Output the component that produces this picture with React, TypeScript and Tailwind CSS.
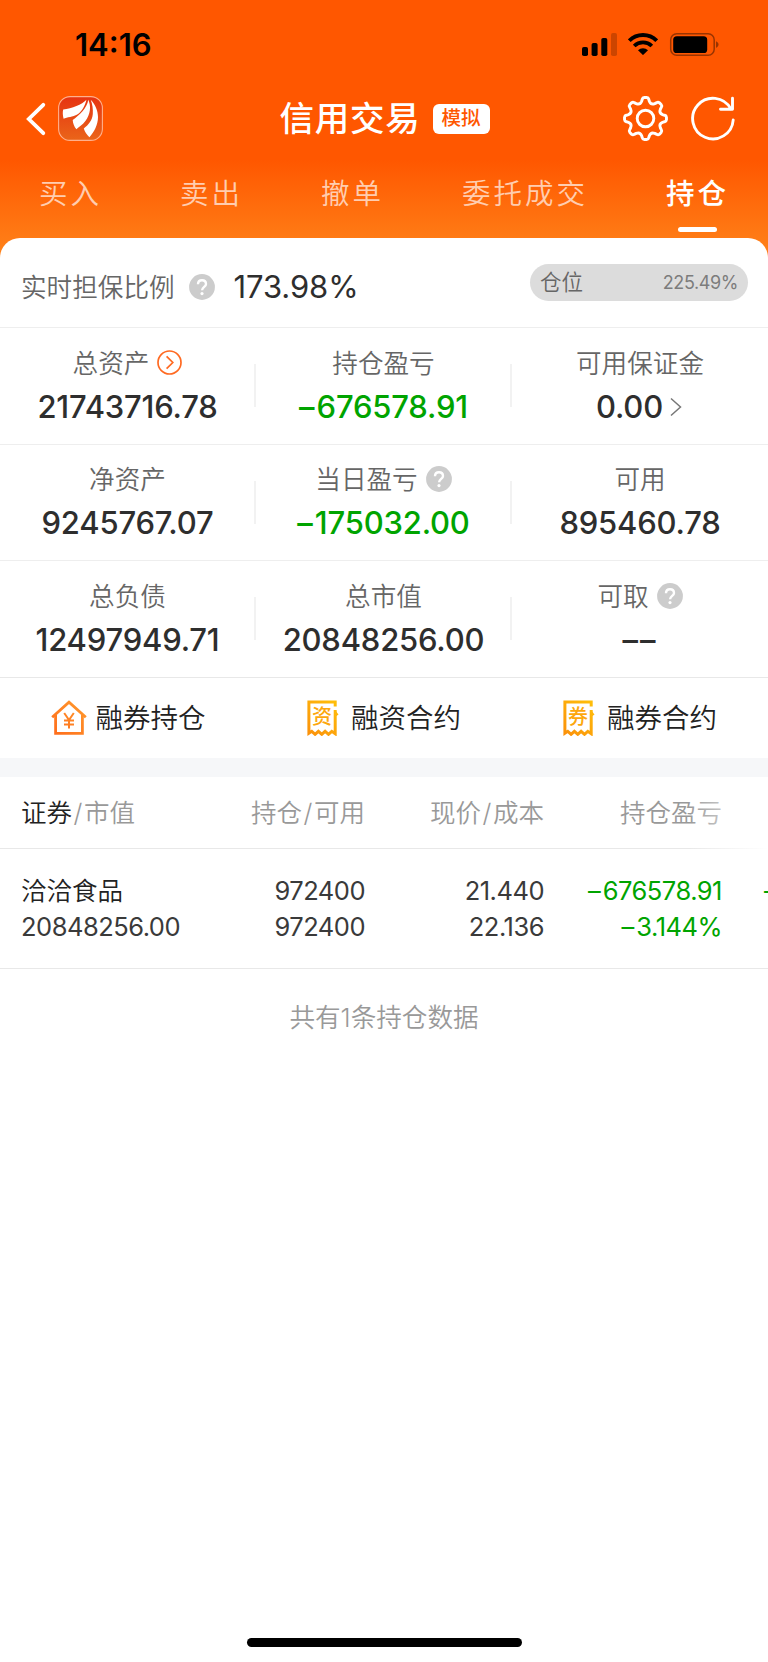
import React from 'react';
import clsx from 'clsx';

const tabs = ['买入', '卖出', '撤单', '委托成交', '持仓'];

const assets = [
  [
    { label: '总资产', value: '21743716.78', icon: 'arrow' },
    { label: '持仓盈亏', value: '–676578.91', green: true },
    { label: '可用保证金', value: '0.00', more: true },
  ],
  [
    { label: '净资产', value: '9245767.07' },
    { label: '当日盈亏', value: '–175032.00', green: true, icon: 'help' },
    { label: '可用', value: '895460.78' },
  ],
  [
    { label: '总负债', value: '12497949.71' },
    { label: '总市值', value: '20848256.00' },
    { label: '可取', value: '––', icon: 'help' },
  ],
];

// Eight rounded teeth around (22.5, 22.5)
function gearPath() {
  const p = (deg: number, r: number) => {
    const a = ((deg - 90) * Math.PI) / 180;
    return `${(22.5 + r * Math.cos(a)).toFixed(2)} ${(22.5 + r * Math.sin(a)).toFixed(2)}`;
  };
  let d = `M${p(-13, 17.5)}`;
  for (let i = 0; i < 8; i++) {
    const a = i * 45;
    d += `L${p(a - 9.5, 19.5)}Q${p(a - 8, 21)} ${p(a - 3, 21)}L${p(a + 3, 21)}Q${p(a + 8, 21)} ${p(a + 9.5, 19.5)}`;
    d += `L${p(a + 13, 17.5)}Q${p(a + 22.5, 14.4)} ${p(a + 32, 17.5)}`;
  }
  return d + 'Z';
}

// The en dash is drawn wider apart than the digits
function Amount({ value }: { value: string }) {
  const digits = value.replace(/–/g, '');
  const dashes = value.slice(0, value.length - digits.length);
  return (
    <span className="whitespace-nowrap">
      {dashes && <span className="tracking-[2px]">{dashes}</span>}
      {digits}
    </span>
  );
}

function HelpIcon() {
  return (
    <svg className="h-[26px] w-[26px] shrink-0" viewBox="0 0 26 26" fill="none">
      <circle cx="13" cy="13" r="12.9" fill="#cccccc" />
      <path d="M9 10.2C9 7.6 10.7 6.2 13 6.2s4 1.5 4 3.7c0 2.8-3.9 3.1-3.9 6.4" stroke="#fff" strokeWidth="2.4" />
      <circle cx="13" cy="19.6" r="1.6" fill="#fff" />
    </svg>
  );
}

function ArrowIcon() {
  return (
    <svg className="h-[25px] w-[25px] shrink-0" viewBox="0 0 25 25" fill="none" stroke="#ff6a22" strokeWidth="1.7">
      <circle cx="12.5" cy="12.5" r="11.5" />
      <path d="M9.6 6.3l6.2 6.2-6.2 6.2" />
    </svg>
  );
}

function HouseIcon() {
  return (
    <svg className="h-[35px] w-[36px]" viewBox="0 0 36 35" fill="none" stroke="url(#house)" strokeWidth="2.8">
      <defs>
        <linearGradient id="house" x1="0" y1="35" x2="36" y2="0" gradientUnits="userSpaceOnUse">
          <stop stopColor="#ff6a1a" />
          <stop offset="1" stopColor="#ff9d2e" />
        </linearGradient>
      </defs>
      <path d="M1.2 17.2L18 2.2l16.8 15" />
      <path d="M4.6 15v18.4h26.8V15" />
      <path d="M13.2 13l4.8 7 4.8-7M18 20v8.5M13 20.5h10M13 24.5h10" strokeWidth="2" />
    </svg>
  );
}

function BillIcon({ char }: { char: string }) {
  return (
    <div className="relative h-[36px] w-[32px]">
      <svg className="h-[36px] w-[32px]" viewBox="0 0 32 36" fill="none" stroke="url(#bill)" strokeWidth="3">
        <defs>
          <linearGradient id="bill" x1="0" y1="36" x2="32" y2="0" gradientUnits="userSpaceOnUse">
            <stop stopColor="#fb8f0a" />
            <stop offset="1" stopColor="#ffc20a" />
          </linearGradient>
        </defs>
        <path d="M28.2 6.5V1.9H1.9v31.3l2.9-1.9 3.3 3 3.3-3 3.4 3 3.3-3 3.4 3 3.3-3 3.4 2.4V10" />
        <path d="M28 10l3.5 4.5-3.5 2.5z" fill="#ffb60a" stroke="none" />
      </svg>
      <span className="absolute left-[5px] top-[7px] text-[20px] leading-[20px] font-medium text-[#fda70c]">{char}</span>
    </div>
  );
}

function StatusBar() {
  return (
    <div className="flex h-[88px] items-center justify-between pl-[75px] pr-[49px]">
      <span className="text-[31px] leading-none font-semibold text-black">14:16</span>
      <div className="flex items-center">
        <svg className="h-[23px] w-[35px]" viewBox="0 0 35 23">
          <rect x="0" y="14" width="6" height="9" rx="1.8" />
          <rect x="9.6" y="10" width="6" height="13" rx="1.8" />
          <rect x="19.3" y="5" width="6" height="18" rx="1.8" />
          <rect x="29" y="0" width="6" height="23" rx="1.8" opacity=".2" />
        </svg>
        <svg className="ml-[11.5px] h-[22px] w-[30px]" viewBox="0 0 30 22" fill="none" stroke="#000">
          <path d="M1.3 7.7a19.5 19.5 0 0 1 27.4 0" strokeWidth="4" />
          <path d="M6.2 13a12.6 12.6 0 0 1 17.6 0" strokeWidth="3.8" />
          <path d="M10 17.2a7.2 7.2 0 0 1 10 0l-5 4.9z" fill="#000" stroke="none" />
        </svg>
        <svg className="ml-[11px] h-[23px] w-[50px]" viewBox="0 0 50 23" fill="none">
          <rect x="1.7" y=".8" width="43.5" height="21.4" rx="6" stroke="#000" strokeOpacity=".4" strokeWidth="1.5" />
          <rect x="4.2" y="3.2" width="34" height="16.8" rx="3.6" fill="#000" />
          <path d="M47 8.2c1.8.8 2.5 1.9 2.5 3.3s-.7 2.5-2.5 3.3z" fill="#000" fillOpacity=".4" />
        </svg>
      </div>
    </div>
  );
}

function TitleBar() {
  return (
    <div className="flex h-[61px] items-center justify-between pl-[26px] pr-[33px]">
      <div className="flex w-[152px] items-center gap-[12px]">
        <svg className="h-[34px] w-[20px]" viewBox="0 0 20 34" fill="none" stroke="#fff" strokeWidth="3.8" strokeLinecap="round">
          <path d="M17.3 2.8L2.8 17l14.5 14.2" />
        </svg>
        <svg className="h-[45px] w-[45px]" viewBox="0 0 45 45">
          <defs>
            <linearGradient id="logo" x1="0" y1="0" x2="0" y2="1">
              <stop stopColor="#e63312" />
              <stop offset="1" stopColor="#ea6519" />
            </linearGradient>
          </defs>
          <rect x=".6" y=".6" width="43.8" height="43.8" rx="11.5" fill="url(#logo)" stroke="#ffb08c" strokeWidth="1.1" />
          <g fill="#fff">
            <path d="M28.4 3.7C24 8.8 14 12.3 5.2 13.4c-.7 2.5-.5 6 .4 9.4 3.4-1.7 9.5-1.8 13.6-4.3C24.5 15 27.3 9 28.4 3.7z" />
            <path d="M30.2 3.7C29.5 11.5 21 19.5 14.7 24c.2 3.4 1.4 6.5 3.7 9.3 2.4-2.5 6-4.3 9-8.3 5-6.8 6-15 2.8-21.3z" />
            <path d="M32.7 3.7c4.5 4.3 7.3 11 7.3 17.3 0 8-4 15-8.6 20.3-2.5-2.5-4.6-5.3-5.6-8.8 4.5-3.6 8.600-8 9-14.500.3-5-.3-9.900-2.100-14.300z" />
          </g>
        </svg>
      </div>
      <div className="ml-[16px] flex items-center gap-[12px]">
        <h1 className="pt-px text-[34.5px] leading-[50px] font-medium tracking-[0.8px] text-white">信用交易</h1>
        <span className="flex h-[30px] w-[57px] items-center justify-center rounded-[6px] bg-white pt-px text-[19.5px] font-medium text-[#ff5700]">
          模拟
        </span>
      </div>
      <div className="flex w-[160px] items-center justify-end gap-[23px]">
        <svg className="h-[45px] w-[45px]" viewBox="0 0 45 45" fill="none" stroke="#fff" strokeWidth="2.9" strokeLinejoin="round">
          <path d={gearPath()} />
          <circle cx="22.5" cy="22.5" r="8.3" />
        </svg>
        <svg className="h-[45px] w-[44px]" viewBox="0 0 44 45" fill="none" stroke="#fff" strokeWidth="2.9" strokeLinecap="round">
          <path d="M42.2 24a20.3 20.3 0 1 1-2.5-11.3" />
          <path d="M41.5 2.3v10.900H29.500" strokeLinejoin="round" />
        </svg>
      </div>
    </div>
  );
}

function Tabs() {
  return (
    <div className="flex h-[89px] justify-between pl-[39px] pr-[39px] pt-[24px]">
      {tabs.map((tab, i) => {
        const active = i === tabs.length - 1;
        return (
          <div key={tab} className="flex flex-col items-center">
            <span
              className={clsx(
                'text-[28.5px] leading-[42px] tracking-[3px]',
                active ? 'font-medium text-white' : 'font-[350] text-[#ffcdb0]'
              )}
            >
              {tab}
            </span>
            {active && <div className="mt-[12px] h-[5px] w-[39px] rounded-full bg-white" />}
          </div>
        );
      })}
    </div>
  );
}

function AssetGrid() {
  return (
    <div>
      {assets.map((row, i) => (
        <div key={i} className="grid h-[116.5px] grid-cols-3 border-t-[1.5px] border-[#eeeeee]">
          {row.map((cell, j) => (
            <div key={cell.label} className="flex">
              <div className="flex flex-1 flex-col items-center pt-[16px]">
                <div className="flex h-[40px] items-center gap-[8px] text-[25.6px] font-[350] text-[#666]">
                  {cell.label}
                  {cell.icon && <div className="mb-[3px]">{cell.icon === 'help' ? <HelpIcon /> : <ArrowIcon />}</div>}
                </div>
                <div
                  className={clsx(
                    'flex h-[46px] items-center text-[31px] font-medium tracking-[-0.2px]',
                    cell.green ? 'text-[#00a400]' : 'text-[#2e2e2e]'
                  )}
                >
                  <Amount value={cell.value} />
                  {cell.more && (
                    <svg className="ml-[7px] mr-[2px] h-[20px] w-[12px]" viewBox="0 0 12 20" fill="none" stroke="#777" strokeWidth="1.5">
                      <path d="M1 1.5l9.5 8.5L1 18.5" />
                    </svg>
                  )}
                </div>
              </div>
              {j < 2 && <div className="-ml-px mt-[36px] h-[43px] w-[2px] bg-[#f2f2f2]" />}
            </div>
          ))}
        </div>
      ))}
    </div>
  );
}

function Actions() {
  return (
    <div className="grid h-[81px] grid-cols-3 border-t border-[#e8e8e8] text-[27.5px] font-[350] text-[#222]">
      <div className="flex items-center justify-center gap-[9px]">
        <HouseIcon />
        <span className="pt-[2px]">融券持仓</span>
      </div>
      <div className="flex items-center justify-center gap-[12px]">
        <BillIcon char="资" />
        <span className="pt-[2px]">融资合约</span>
      </div>
      <div className="flex items-center justify-center gap-[12px]">
        <BillIcon char="券" />
        <span className="pt-[2px]">融券合约</span>
      </div>
    </div>
  );
}

function Slash() {
  return <span className="mx-[1.5px]">/</span>;
}

function Positions() {
  return (
    <div className="overflow-hidden">
      <div className="relative grid h-[72px] grid-cols-[170px_174px_179px_178px] items-center border-b border-[#e8e8e8] pl-[21px] pt-[2px] text-right text-[25.5px] font-[350] text-[#999]">
        <div className="text-left">
          <span className="text-[#222]">证券</span>
          <Slash />
          市值
        </div>
        <div>
          持仓
          <Slash />
          可用
        </div>
        <div>
          现价
          <Slash />
          成本
        </div>
        <div>持仓盈亏</div>
        <div className="absolute -bottom-px right-0 top-0 w-[80px] bg-gradient-to-r from-transparent to-white" />
      </div>
      <div className="grid h-[120px] grid-cols-[170px_174px_179px_178px_46px] border-b border-[#e8e8e8] pl-[21px] pt-[24px] text-right text-[25.5px] leading-[36px] tracking-[-0.5px] text-[#3a3a3a]">
        <div className="text-left">
          <div className="font-[350] tracking-normal text-[#222]">洽洽食品</div>
          <div>20848256.00</div>
        </div>
        <div>
          <div>972400</div>
          <div>972400</div>
        </div>
        <div>
          <div>21.440</div>
          <div>22.136</div>
        </div>
        <div className="text-[#00a400]">
          <div>
            <Amount value="–676578.91" />
          </div>
          <div>
            <Amount value="–3.144%" />
          </div>
        </div>
        <div className="overflow-hidden pl-[42px] text-left text-[#00a400]">–</div>
      </div>
      <div className="pt-[29px] text-center text-[25.6px] leading-[40px] font-[350] text-[#999]">共有1条持仓数据</div>
    </div>
  );
}

function App() {
  return (
    <div className="flex h-[1662px] w-[768px] flex-col overflow-hidden bg-white font-['Inter','Noto_Sans_CJK_SC',sans-serif]">
      <div className="bg-[linear-gradient(to_bottom,#ff5700_0px,#ff5700_160px,#ff8018_250px)]">
        <StatusBar />
        <TitleBar />
        <Tabs />
        <div className="flex h-[89px] justify-between rounded-t-[20px] bg-white pl-[21px] pr-[20px]">
          <div className="flex items-center pt-[9px]">
            <span className="pt-[2px] text-[25.6px] font-[350] text-[#666]">实时担保比例</span>
            <div className="ml-[14px]">
              <HelpIcon />
            </div>
            <span className="ml-[19px] text-[31px] tracking-[-0.1px] text-[#2e2e2e]">173.98%</span>
          </div>
          <div className="mt-[26px] flex h-[37px] w-[218px] items-center justify-between rounded-full bg-[#dcdcdc] pl-[10px] pr-[10px] text-[#666]">
            <span className="text-[21.5px] font-[350]">仓位</span>
            <span className="text-[18px] tracking-[-0.4px] text-[#7c7c7c]">225.49%</span>
          </div>
        </div>
      </div>
      <AssetGrid />
      <Actions />
      <div className="h-[19px] bg-[#f6f7f9]" />
      <Positions />
      <div className="mx-auto mb-[15px] mt-auto h-[9px] w-[275px] rounded-full bg-black" />
    </div>
  );
}

export default App;
